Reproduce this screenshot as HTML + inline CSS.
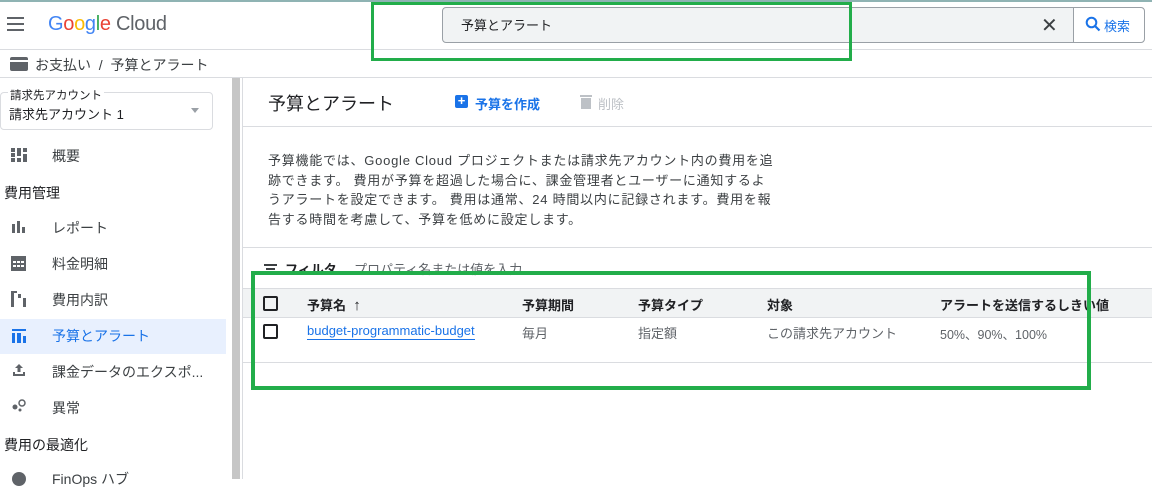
<!DOCTYPE html>
<html><head><meta charset="utf-8"><style>
*{margin:0;padding:0;box-sizing:border-box}
body{width:1152px;height:479px;overflow:hidden;background:#fff;font-family:"Liberation Sans","Noto Sans CJK JP",sans-serif;color:#202124;position:relative}
.a{position:absolute;white-space:nowrap}
.hl{position:absolute;height:1px;background:#dadce0}
.nav{font-size:14px;color:#3c4043}
.cb{position:absolute;width:15px;height:15px;border:2px solid #202124;border-radius:2px}
.hd{font-size:13px;font-weight:bold;color:#202124}
.cell{font-size:13px;color:#5f6368}
</style></head><body>
<div class="a" style="left:0;top:0;width:1152px;height:2px;background:#8fb3b3"></div>
<div class="a" style="left:7px;top:17px;width:17px;height:2px;background:#5f6368"></div>
<div class="a" style="left:7px;top:23px;width:17px;height:2px;background:#5f6368"></div>
<div class="a" style="left:7px;top:29px;width:17px;height:2px;background:#5f6368"></div>
<div class="a" style="left:48px;top:13px;font-size:20px;letter-spacing:-0.3px"><span style="color:#4285f4">G</span><span style="color:#ea4335">o</span><span style="color:#fbbc05">o</span><span style="color:#4285f4">g</span><span style="color:#34a853">l</span><span style="color:#ea4335">e</span> <span style="color:#5f6368">Cloud</span></div>
<div class="a" style="left:442px;top:7px;width:703px;height:36px;background:#f1f3f4;border:1px solid #9aa0a6;border-radius:4px"></div>
<div class="a" style="left:1073px;top:8px;width:71px;height:34px;background:#fff;border-left:1px solid #9aa0a6;border-radius:0 4px 4px 0"></div>
<div class="a" style="left:461px;top:15px;font-size:13px">予算とアラート</div>
<div class="a" style="left:1041px;top:13px;font-size:20px;color:#3c4043">✕</div>
<svg class="a" style="left:1085px;top:16px" width="16" height="16" viewBox="0 0 16 16"><circle cx="6.5" cy="6.5" r="4.8" fill="none" stroke="#1a73e8" stroke-width="2"/><path d="M10 10l4.5 4.5" stroke="#1a73e8" stroke-width="2.2"/></svg>
<div class="a" style="left:1104px;top:16px;font-size:13px;color:#1a73e8">検索</div>
<div class="hl" style="left:0;top:49px;width:1152px"></div>
<div class="a" style="left:10px;top:57px;width:18px;height:14px;background:#5f6368;border-radius:2px"></div>
<div class="a" style="left:10px;top:60px;width:18px;height:2px;background:#fff"></div>
<div class="a" style="left:35px;top:55px;font-size:14px;color:#3c4043">お支払い &nbsp;/ &nbsp;予算とアラート</div>
<div class="hl" style="left:0;top:77px;width:1152px"></div>
<div class="a" style="left:0;top:92px;width:213px;height:38px;border:1px solid #dadce0;border-radius:4px"></div>
<div class="a" style="left:8px;top:87px;font-size:11.5px;background:#fff;padding:0 2px">請求先アカウント</div>
<div class="a" style="left:9px;top:104px;font-size:13px">請求先アカウント 1</div>
<div class="a" style="left:191px;top:108px;border:4px solid transparent;border-top:5px solid #9aa0a6"></div>
<svg class="a" style="left:11px;top:148px" width="16" height="14"><rect x="0" y="0" width="4" height="4" fill="#5f6368"/><rect x="0" y="5" width="4" height="4" fill="#5f6368"/><rect x="0" y="10" width="4" height="4" fill="#5f6368"/><rect x="6" y="0" width="4" height="8" fill="#5f6368"/><rect x="6" y="10" width="4" height="4" fill="#5f6368"/><rect x="12" y="0" width="4" height="4" fill="#5f6368"/><rect x="12" y="6" width="4" height="8" fill="#5f6368"/></svg>
<div class="a nav" style="left:52px;top:146px">概要</div>
<div class="a" style="left:4px;top:183px;font-size:14px;color:#202124">費用管理</div>
<svg class="a" style="left:12px;top:221px" width="14" height="12"><rect x="0" y="3" width="3" height="9" fill="#5f6368"/><rect x="5" y="0" width="3" height="12" fill="#5f6368"/><rect x="10" y="6" width="3" height="6" fill="#5f6368"/></svg>
<div class="a nav" style="left:52px;top:218px">レポート</div>
<svg class="a" style="left:11px;top:256px" width="15" height="15"><rect x="0" y="0" width="15" height="15" fill="#5f6368"/><rect x="2" y="5" width="3" height="2" fill="#fff"/><rect x="6" y="5" width="3" height="2" fill="#fff"/><rect x="10" y="5" width="3" height="2" fill="#fff"/><rect x="2" y="9" width="3" height="2" fill="#fff"/><rect x="6" y="9" width="3" height="2" fill="#fff"/><rect x="10" y="9" width="3" height="2" fill="#fff"/></svg>
<div class="a nav" style="left:52px;top:254px">料金明細</div>
<svg class="a" style="left:11px;top:291px" width="16" height="16"><rect x="0" y="0" width="3" height="16" fill="#5f6368"/><rect x="3" y="0" width="3" height="2" fill="#5f6368"/><rect x="7" y="3" width="3" height="4" fill="#5f6368"/><rect x="12" y="7" width="3" height="9" fill="#5f6368"/></svg>
<div class="a nav" style="left:52px;top:290px">費用内訳</div>
<div class="a" style="left:0;top:319px;width:226px;height:35px;background:#e8f0fe"></div>
<svg class="a" style="left:12px;top:329px" width="14" height="14"><rect x="0" y="0" width="14" height="2" fill="#1a73e8"/><rect x="0" y="4" width="3" height="10" fill="#1a73e8"/><rect x="5" y="4" width="4" height="10" fill="#1a73e8"/><rect x="11" y="7" width="3" height="7" fill="#1a73e8"/></svg>
<div class="a nav" style="left:52px;top:326px;color:#1a73e8">予算とアラート</div>
<svg class="a" style="left:12px;top:363px" width="14" height="14"><path d="M7 1l-4 4h2.5v4h3V5H11z M1 9v4h12V9h-2v2H3V9z" fill="#5f6368"/></svg>
<div class="a nav" style="left:52px;top:362px">課金データのエクスポ...</div>
<svg class="a" style="left:12px;top:398px" width="16" height="14"><circle cx="3" cy="9" r="2.5" fill="#5f6368"/><circle cx="10" cy="5" r="3" fill="none" stroke="#5f6368" stroke-width="1.5"/><circle cx="8" cy="12" r="1.5" fill="#5f6368"/></svg>
<div class="a nav" style="left:52px;top:398px">異常</div>
<div class="a" style="left:4px;top:435px;font-size:14px;color:#202124">費用の最適化</div>
<div class="a" style="left:12px;top:472px;width:14px;height:14px;border-radius:50%;background:#5f6368"></div>
<div class="a nav" style="left:52px;top:469px">FinOps ハブ</div>
<div class="a" style="left:232px;top:78px;width:8px;height:401px;background:#c6c6c6"></div>
<div class="a" style="left:242px;top:78px;width:1px;height:401px;background:#dadce0"></div>
<div class="a" style="left:268px;top:90px;font-size:18px;color:#202124">予算とアラート</div>
<div class="a" style="left:455px;top:95px;width:13px;height:13px;background:#1a73e8;border-radius:2px;color:#fff;font-size:13px;line-height:12px;text-align:center;font-weight:bold">+</div>
<div class="a" style="left:475px;top:94px;font-size:13px;color:#1a73e8;font-weight:bold">予算を作成</div>
<svg class="a" style="left:580px;top:94px" width="12" height="15"><rect x="0" y="1" width="12" height="2" fill="#bdc1c6"/><rect x="1" y="4" width="10" height="11" fill="#bdc1c6"/></svg>
<div class="a" style="left:598px;top:94px;font-size:13px;color:#bdc1c6">削除</div>
<div class="hl" style="left:243px;top:126px;width:909px"></div>
<div class="a" style="left:268px;top:151px;font-size:13px;line-height:19.5px;color:#3c4043;letter-spacing:0.75px">予算機能では、Google Cloud プロジェクトまたは請求先アカウント内の費用を追<br>跡できます。 費用が予算を超過した場合に、課金管理者とユーザーに通知するよ<br>うアラートを設定できます。 費用は通常、24 時間以内に記録されます。費用を報<br>告する時間を考慮して、予算を低めに設定します。</div>
<div class="hl" style="left:243px;top:247px;width:909px"></div>
<div class="a" style="left:264px;top:264px;width:13px;height:2px;background:#3c4043"></div>
<div class="a" style="left:266px;top:268px;width:9px;height:2px;background:#3c4043"></div>
<div class="a" style="left:285px;top:259px;font-size:13px;font-weight:bold">フィルタ</div>
<div class="a" style="left:354px;top:259px;font-size:13px;color:#5f6368">プロパティ名または値を入力</div>
<div class="a" style="left:243px;top:288px;width:909px;height:30px;background:#f1f3f4;border-top:1px solid #dadce0;border-bottom:1px solid #dadce0"></div>
<div class="cb" style="left:263px;top:296px"></div>
<div class="a hd" style="left:307px;top:295px">予算名 &nbsp;<span style="font-size:15px">↑</span></div>
<div class="a hd" style="left:522px;top:295px">予算期間</div>
<div class="a hd" style="left:638px;top:295px">予算タイプ</div>
<div class="a hd" style="left:767px;top:295px">対象</div>
<div class="a hd" style="left:940px;top:295px">アラートを送信するしきい値</div>
<div class="cb" style="left:263px;top:324px"></div>
<div class="a" style="left:307px;top:323px;font-size:13px;color:#1a73e8;border-bottom:1px solid #1a73e8;line-height:16px">budget-programmatic-budget</div>
<div class="a cell" style="left:522px;top:323px">毎月</div>
<div class="a cell" style="left:638px;top:323px">指定額</div>
<div class="a cell" style="left:767px;top:323px">この請求先アカウント</div>
<div class="a cell" style="left:940px;top:324px;font-size:12.5px">50%、90%、100%</div>
<div class="hl" style="left:243px;top:362px;width:909px"></div>
<div class="a" style="left:371px;top:2px;width:481px;height:59px;border:3px solid #22ad4a"></div>
<div class="a" style="left:251px;top:271px;width:840px;height:119px;border:4px solid #22ad4a"></div>
</body></html>
